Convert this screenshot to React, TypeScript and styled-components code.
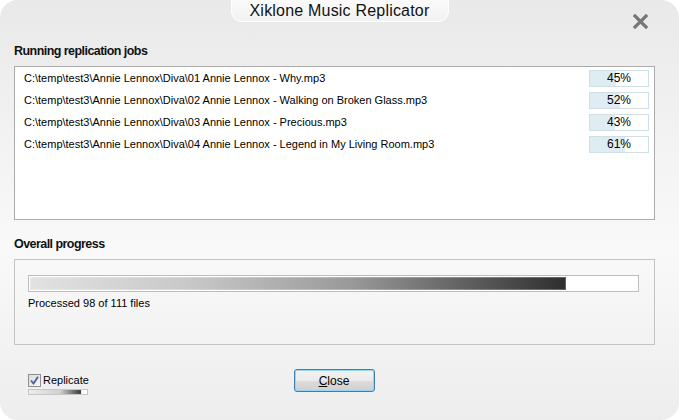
import React from 'react'
import styled, { createGlobalStyle } from 'styled-components'

const GlobalStyle = createGlobalStyle`
  html, body {
    margin: 0;
    padding: 0;
    background: #ffffff;
  }
  body {
    font-family: 'Liberation Sans', Arial, sans-serif;
    color: #000;
  }
`

interface Job {
  path: string
  percent: number
}

const jobs: Job[] = [
  { path: 'C:\\temp\\test3\\Annie Lennox\\Diva\\01 Annie Lennox - Why.mp3', percent: 45 },
  { path: 'C:\\temp\\test3\\Annie Lennox\\Diva\\02 Annie Lennox - Walking on Broken Glass.mp3', percent: 52 },
  { path: 'C:\\temp\\test3\\Annie Lennox\\Diva\\03 Annie Lennox - Precious.mp3', percent: 43 },
  { path: 'C:\\temp\\test3\\Annie Lennox\\Diva\\04 Annie Lennox - Legend in My Living Room.mp3', percent: 61 },
]

const processed = 98
const total = 111

const Window = styled.div`
  width: 679px;
  height: 420px;
  box-sizing: border-box;
  border-radius: 18px;
  background: linear-gradient(to bottom, #e9e9e9 0%, #f3f3f3 35%, #f9f9f9 60%, #ededed 100%);
  display: flex;
  flex-direction: column;
  overflow: hidden;
`

const Header = styled.div`
  height: 42px;
  display: grid;
  grid-template-columns: 1fr auto 1fr;
  align-items: start;
`

const TitleTab = styled.div`
  grid-column: 2;
  width: 218px;
  height: 22px;
  box-sizing: border-box;
  border: 1px solid #ffffff;
  border-top: none;
  border-radius: 0 0 11px 11px;
  background: linear-gradient(to bottom, #fbfbfb, #f1f1f1);
  display: flex;
  align-items: center;
  justify-content: center;
  font-size: 16px;
  letter-spacing: 0.2px;
  color: #111;
  line-height: 20px;
`

const CloseIcon = styled.div`
  grid-column: 3;
  justify-self: end;
  margin: 14px 31px 0 0;
  width: 15px;
  height: 15px;
  display: flex;
`

const Content = styled.div`
  flex: 1;
  padding: 0 24px 0 14px;
  display: flex;
  flex-direction: column;
`

const SectionTitle = styled.div<{ $top: number }>`
  margin-top: ${({ $top }) => $top}px;
  height: 24px;
  line-height: 18px;
  font-size: 12.5px;
  font-weight: bold;
  letter-spacing: -0.55px;
  color: #111;
`

const JobList = styled.div`
  height: 154px;
  box-sizing: border-box;
  border: 1px solid #ababab;
  background: #ffffff;
  display: flex;
  flex-direction: column;
`

const JobRow = styled.div`
  height: 22px;
  display: flex;
  align-items: center;
  padding: 0 5px 0 9px;
  font-size: 11px;
`

const JobPath = styled.span`
  flex: 1;
  white-space: nowrap;
  overflow: hidden;
`

const PercentBox = styled.div`
  position: relative;
  width: 60px;
  height: 17px;
  box-sizing: border-box;
  border: 1px solid #cfdfe5;
  background: #ffffff;
  display: flex;
  align-items: center;
  justify-content: center;
  font-size: 12px;
  overflow: hidden;
`

const PercentFill = styled.div`
  position: absolute;
  left: 0;
  top: 0;
  bottom: 0;
  background: #dfedf2;
`

const PercentText = styled.span`
  position: relative;
`

const ProgressPanel = styled.div`
  height: 86px;
  box-sizing: border-box;
  border: 1px solid #c4c4c4;
  padding: 15px 15px 0 13px;
  display: flex;
  flex-direction: column;
`

const ProgressTrack = styled.div`
  height: 17px;
  box-sizing: border-box;
  border: 1px solid #bdbdbd;
  background: #ffffff;
  padding: 1px;
  display: flex;
`

const ProgressFill = styled.div`
  height: 100%;
  background: linear-gradient(to right, #e2e2e2 0%, #c8c8c8 30%, #999999 60%, #2e2e2e 100%);
  box-shadow: inset 0 0 0 1px rgba(255, 255, 255, 0.25);
`

const ProgressLabel = styled.div`
  margin-top: 4px;
  font-size: 11px;
  line-height: 14px;
`

const Footer = styled.div`
  margin-top: 24px;
  display: grid;
  grid-template-columns: 1fr auto 1fr;
  align-items: start;
`

const ReplicateBlock = styled.div`
  padding: 4px 0 0 14px;
  display: flex;
  flex-direction: column;
  gap: 2px;
`

const CheckRow = styled.label`
  display: flex;
  align-items: center;
  gap: 2px;
  font-size: 11px;
  line-height: 14px;
`

const CheckBox = styled.span`
  width: 13px;
  height: 13px;
  box-sizing: border-box;
  border: 1px solid #8e8f8f;
  background: linear-gradient(135deg, #dcdcdc, #f6f6f6);
  display: flex;
  align-items: center;
  justify-content: center;
`

const MiniTrack = styled.div`
  width: 60px;
  height: 6px;
  box-sizing: border-box;
  border: 1px solid #c6c6c6;
  background: #ffffff;
  display: flex;
`

const MiniFill = styled.div`
  background: linear-gradient(to right, #ededed, #d0d0d0 60%, #3a3a3a);
`

const Button = styled.button`
  grid-column: 2;
  width: 81px;
  height: 23px;
  margin-left: -1px;
  box-sizing: border-box;
  border: 1px solid #3c7fb1;
  border-radius: 3px;
  box-shadow: inset 0 0 0 1px #95d6f4;
  background: linear-gradient(to bottom, #f2f2f2 0%, #ebebeb 50%, #dddddd 51%, #cfcfcf 100%);
  font-family: 'Liberation Sans', Arial, sans-serif;
  font-size: 12px;
  color: #000;
  padding: 0;
`

const Mnemonic = styled.span`
  text-decoration: underline;
`

const App: React.FC = () => {
  return (
    <>
      <GlobalStyle />
      <Window>
        <Header>
          <TitleTab>Xiklone Music Replicator</TitleTab>
          <CloseIcon>
            <svg width="15" height="15" viewBox="0 0 15 15">
              <path d="M2 2 L13 13 M13 2 L2 13" stroke="#777" strokeWidth="3.2" strokeLinecap="square" />
            </svg>
          </CloseIcon>
        </Header>
        <Content>
          <SectionTitle $top={0}>Running replication jobs</SectionTitle>
          <JobList>
            {jobs.map((job) => (
              <JobRow key={job.path}>
                <JobPath>{job.path}</JobPath>
                <PercentBox>
                  <PercentFill style={{ width: `${job.percent}%` }} />
                  <PercentText>{job.percent}%</PercentText>
                </PercentBox>
              </JobRow>
            ))}
          </JobList>
          <SectionTitle $top={15}>Overall progress</SectionTitle>
          <ProgressPanel>
            <ProgressTrack>
              <ProgressFill style={{ width: `${(processed / total) * 100}%` }} />
            </ProgressTrack>
            <ProgressLabel>
              Processed {processed} of {total} files
            </ProgressLabel>
          </ProgressPanel>
          <Footer>
            <ReplicateBlock>
              <CheckRow>
                <CheckBox>
                  <svg width="9" height="9" viewBox="0 0 9 9">
                    <path d="M1 4.5 L3.5 7.5 L8 0.8" stroke="#4a5f9a" strokeWidth="1.8" fill="none" />
                  </svg>
                </CheckBox>
                Replicate
              </CheckRow>
              <MiniTrack>
                <MiniFill style={{ width: '90%' }} />
              </MiniTrack>
            </ReplicateBlock>
            <Button>
              <Mnemonic>C</Mnemonic>lose
            </Button>
          </Footer>
        </Content>
      </Window>
    </>
  )
}

export default App
